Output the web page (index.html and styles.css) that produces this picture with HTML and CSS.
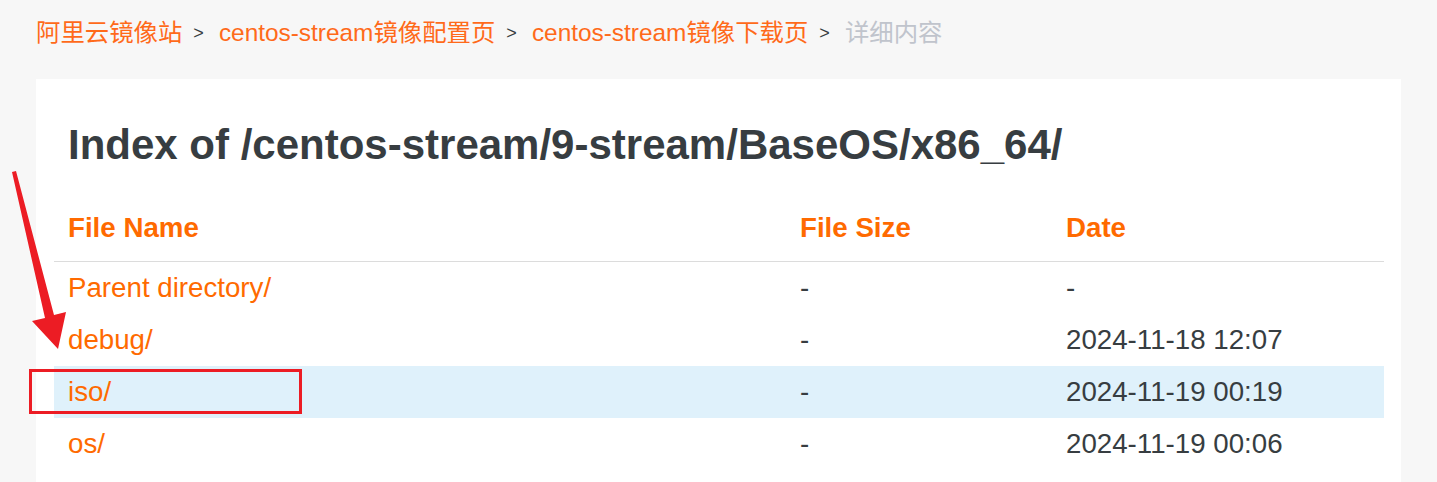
FILE: index.html
```html
<!DOCTYPE html>
<html lang="zh-CN">
<head>
<meta charset="utf-8">
<title>Index of /centos-stream/9-stream/BaseOS/x86_64/</title>
<link rel="stylesheet" href="styles.css">
</head>
<body>
<div class="page">
  <nav class="breadcrumb">
    <a class="crumb" href="#">阿里云镜像站</a><span class="sep">&gt;</span>
    <a class="crumb" href="#">centos-stream镜像配置页</a><span class="sep">&gt;</span>
    <a class="crumb" href="#">centos-stream镜像下载页</a><span class="sep">&gt;</span>
    <span class="crumb current">详细内容</span>
  </nav>
  <main class="card">
    <h1 class="title">Index of /centos-stream/9-stream/BaseOS/x86_64/</h1>
    <table class="listing">
      <colgroup>
        <col class="c-name"><col class="c-size"><col class="c-date">
      </colgroup>
      <thead>
        <tr><th>File Name</th><th>File Size</th><th>Date</th></tr>
      </thead>
      <tbody>
        <tr><td><a href="#">Parent directory/</a></td><td>-</td><td>-</td></tr>
        <tr><td><a href="#">debug/</a></td><td>-</td><td>2024-11-18 12:07</td></tr>
        <tr class="hover"><td><a href="#">iso/</a></td><td>-</td><td>2024-11-19 00:19</td></tr>
        <tr><td><a href="#">os/</a></td><td>-</td><td>2024-11-19 00:06</td></tr>
      </tbody>
    </table>
  </main>
</div>
<svg class="annotation" width="1437" height="482" viewBox="0 0 1437 482" aria-hidden="true">
  <polygon points="12,172 16,171 54,315 66,312 58,349 32,321 45,318" fill="#ec1c24"/>
  <rect x="30.5" y="370.5" width="270" height="42" fill="none" stroke="#ec1c24" stroke-width="3"/>
</svg>
</body>
</html>
```

FILE: styles.css
```css
html, body {
  margin: 0;
  padding: 0;
}
body {
  background: #f7f7f7;
  font-family: "Liberation Sans", Arial, "Noto Sans CJK SC", sans-serif;
  color: #373d41;
  position: relative;
  height: 482px;
  overflow: hidden;
}
.page {
  padding: 0 36px;
}
.breadcrumb {
  display: flex;
  align-items: center;
  height: 32px;
  padding-top: 17px;
  margin-bottom: 30px;
  font-size: 24.4px;
  line-height: 32px;
  white-space: nowrap;
}
.crumb {
  color: #ff6a1a;
  text-decoration: none;
}
.crumb.current {
  color: #c0c4cc;
}
.sep {
  color: #373d41;
  font-size: 18px;
  margin: 0 15px 0 11px;
}
.card {
  background: #fff;
  padding: 42px 17px 30px 18px;
}
.title {
  margin: 0 0 0 14px;
  font-size: 42px;
  line-height: 48px;
  font-weight: bold;
  color: #373d41;
}
.listing {
  width: 100%;
  border-collapse: collapse;
  table-layout: fixed;
  font-size: 27.7px;
  line-height: 32px;
}
.c-name { width: 732px; }
.c-size { width: 266px; }
.c-date { width: 332px; }
.listing th {
  text-align: left;
  font-weight: bold;
  color: #ff6a00;
  padding: 43px 14px 17px;
  border-bottom: 1px solid #dcdcdc;
}
.listing td {
  height: 52px;
  padding: 0 14px;
  vertical-align: middle;
  color: #373d41;
  white-space: nowrap;
}
.listing td a {
  color: #ff6a00;
  text-decoration: none;
}
.listing tr.hover td {
  background: #dff1fb;
}
.annotation {
  position: absolute;
  left: 0;
  top: 0;
  pointer-events: none;
}
```
